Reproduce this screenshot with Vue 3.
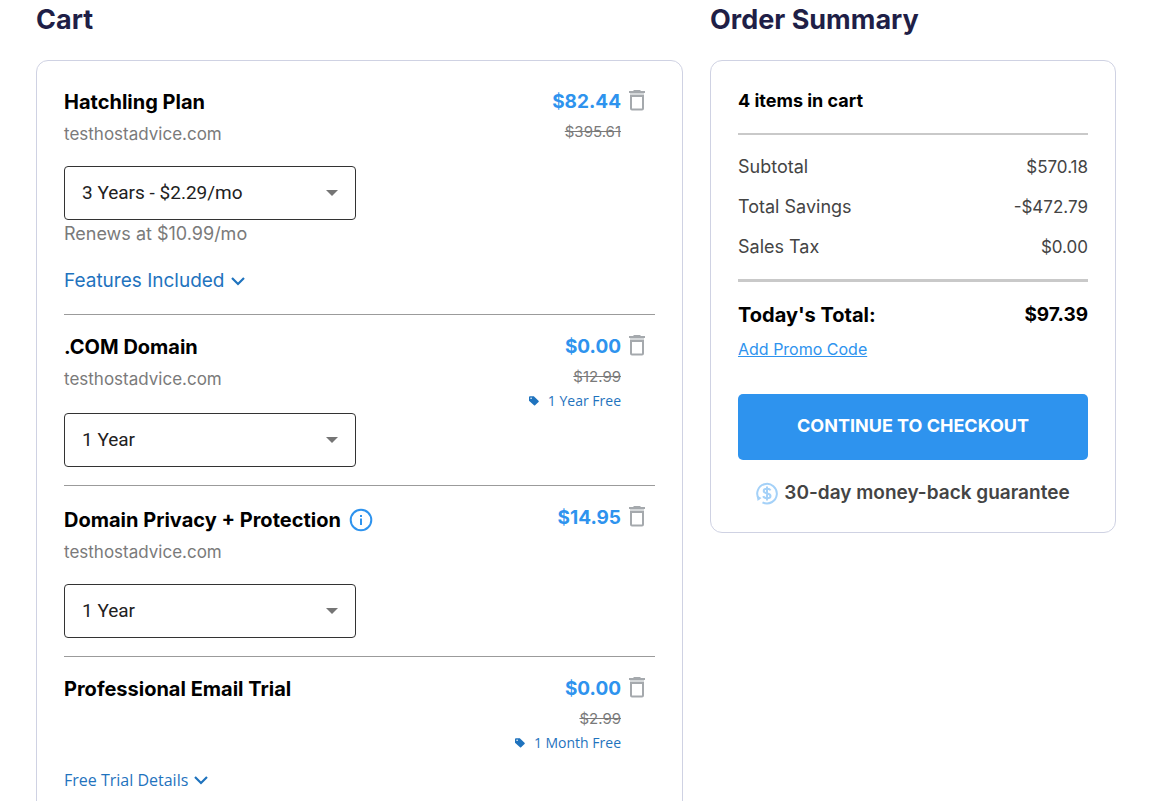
<script setup>
import { ref } from 'vue'

const items = ref([
  { id: 'plan', name: 'Hatchling Plan', domain: 'testhostadvice.com', term: '3 Years - $2.29/mo', renews: 'Renews at $10.99/mo', price: '$82.44', was: '$395.61', details: 'Features Included' },
  { id: 'com', name: '.COM Domain', domain: 'testhostadvice.com', term: '1 Year', price: '$0.00', was: '$12.99', offer: '1 Year Free' },
  { id: 'privacy', name: 'Domain Privacy + Protection', info: true, domain: 'testhostadvice.com', term: '1 Year', price: '$14.95' },
  { id: 'email', name: 'Professional Email Trial', price: '$0.00', was: '$2.99', offer: '1 Month Free', details: 'Free Trial Details' }
])

const lines = [
  { label: 'Subtotal', amount: '$570.18' },
  { label: 'Total Savings', amount: '-$472.79' },
  { label: 'Sales Tax', amount: '$0.00' }
]
</script>

<template>
  <main class="page">
    <section class="column">
      <h1 class="heading">Cart</h1>
      <div class="card cart">
        <article v-for="item in items" :key="item.id" class="item" :class="item.id">
          <div class="product">
            <h2 class="name">
              <span>{{ item.name }}</span>
              <button v-if="item.info" class="icon-button" type="button" aria-label="More information">
                <svg width="24" height="24" viewBox="0 0 24 24" fill="none" stroke="#2e93ee" stroke-width="2">
                  <circle cx="12" cy="12" r="10.3" />
                  <path d="M12 10.5v6.5M12 7v2" />
                </svg>
              </button>
            </h2>
            <p v-if="item.domain" class="site">{{ item.domain }}</p>
            <div v-if="item.term" class="term">
              <select :aria-label="'Term for ' + item.name">
                <option>{{ item.term }}</option>
              </select>
              <svg class="caret" width="12" height="6" viewBox="0 0 12 6"><path d="M0 0h12L6 6z" fill="#757575" /></svg>
            </div>
            <p v-if="item.renews" class="renews">{{ item.renews }}</p>
            <button v-if="item.details" class="details" type="button">
              <span>{{ item.details }}</span>
              <svg width="14" height="10" viewBox="0 0 14 10" fill="none" stroke="#1f73be" stroke-width="2.2"><path d="M1 2l6 6 6-6" /></svg>
            </button>
          </div>
          <div class="cost">
            <div class="price">{{ item.price }}</div>
            <del v-if="item.was" class="was">{{ item.was }}</del>
            <div v-if="item.offer" class="offer">
              <svg width="10" height="10" viewBox="0 0 10 10"><path fill="#1f73be" fill-rule="evenodd" d="M0 1.2Q0 .2 1 .2h3.8l4.7 4.6q.6.6 0 1.1L6.1 9.3q-.6.6-1.1 0L0 4.7zM2.1 1.4a.8.8 0 1 0 0 1.6.8.8 0 0 0 0-1.6z" /></svg>
              <span>{{ item.offer }}</span>
            </div>
          </div>
          <button class="icon-button remove" type="button" :aria-label="'Remove ' + item.name">
            <svg width="16" height="21" viewBox="0 0 16 21">
              <path fill="#a5a9ad" d="M5 0h6l1 1h4v2H0V1h4z" />
              <path fill="#d5d8da" d="M1 3h14v2H1z" />
              <path fill="none" stroke="#a5a9ad" stroke-width="2" d="M2 6h12v12.5q0 1-1 1H3q-1 0-1-1z" />
            </svg>
          </button>
        </article>
      </div>
    </section>

    <section class="column">
      <h1 class="heading">Order Summary</h1>
      <div class="card summary">
        <h2 class="count">4 items in cart</h2>
        <dl class="lines">
          <div v-for="line in lines" :key="line.label" class="line">
            <dt>{{ line.label }}</dt>
            <dd>{{ line.amount }}</dd>
          </div>
        </dl>
        <div class="total">
          <span>Today's Total:</span>
          <span class="sum">$97.39</span>
        </div>
        <a class="promo" href="#">Add Promo Code</a>
        <button class="checkout" type="button">CONTINUE TO CHECKOUT</button>
        <div class="guarantee">
          <svg width="22" height="23" viewBox="0 0 22 23" fill="none" stroke="#a4d1f8" stroke-width="2">
            <path d="M3.2 17.5A9.8 9.8 0 1 1 6.500 20.300" />
            <path d="M1 13.500l.5 5.500 4-3z" fill="#a4d1f8" stroke="none" />
            <path d="M14.500 8.300C14 7.100 12.800 6.800 11 6.800c-2 0-3.300.9-3.300 2.300 0 3.300 6.800 1.500 6.800 4.800 0 1.500-1.400 2.300-3.500 2.300-2 0-3.300-.6-3.800-2M11 4.500v14" />
          </svg>
          <span>30-day money-back guarantee</span>
        </div>
      </div>
    </section>
  </main>
</template>

<style>
body { margin: 0; background: #fff; }
</style>

<style scoped>
.page {
  display: grid;
  grid-template-columns: 647fr 406fr;
  gap: 27px;
  align-items: start;
  padding: 0 33px 0 36px;
  font-family: Inter, "Liberation Sans", sans-serif;
  color: #000;
}
h1, h2, p, dl, dd { margin: 0; }
button { font-family: inherit; cursor: pointer; }
.heading { height: 60px; font-size: 27px; line-height: 40px; font-weight: 700; color: #1f1f47; }
.card { border: 1px solid #cfd2e3; border-radius: 12px; padding: 0 27px; background: #fff; }
.item { display: flex; align-items: flex-start; padding: 16px 0 18px; border-bottom: 1px solid #9b9b9b; }
.plan { padding: 25px 0 20px; }
.privacy { padding-top: 18px; }
.product { flex: 1; }
.name { display: flex; align-items: center; gap: 8px; font-size: 20px; line-height: 32px; font-weight: 700; }
.site { font-size: 17px; line-height: 32px; color: #7a7a7a; }
.renews { font-size: 18px; line-height: 28px; color: #7a7a7a; }
.icon-button { display: flex; padding: 0; border: 0; background: none; }
.term { position: relative; width: 292px; margin-top: 16px; }
.com .term { margin-top: 18px; }
.com { padding-bottom: 18px; }
select {
  display: block;
  width: 100%;
  height: 54px;
  padding: 0 40px 2px 17px;
  appearance: none;
  border: 1px solid #333;
  border-radius: 4px;
  background: #fff;
  font-family: Roboto, sans-serif;
  font-size: 19px;
  color: #212121;
}
.caret { position: absolute; right: 18px; top: 24px; pointer-events: none; }
.details { display: flex; align-items: center; gap: 6px; margin-top: 20px; padding: 0; border: 0; background: none; font-size: 19px; line-height: 26px; color: #1f73be; }
.email .details { margin-top: 62px; font-family: "Open Sans", sans-serif; font-size: 16px; }
.cost { display: flex; flex-direction: column; align-items: flex-end; }
.price { font-size: 19px; line-height: 32px; font-weight: 700; color: #2e93ee; }
.was { font-size: 15px; line-height: 28px; color: #7a7a7a; }
.offer { display: flex; align-items: center; gap: 9px; font-family: "Open Sans", sans-serif; font-size: 14px; line-height: 20px; color: #1f73be; }
.remove { margin: 4px 10px 0 8px; }
.privacy .price { line-height: 28px; }
.privacy .remove { margin-top: 2px; }
.summary { padding: 24px 27px 22px; }
.count { padding-bottom: 16px; border-bottom: 2px solid #c9c9c9; font-size: 18px; line-height: 32px; font-weight: 700; }
.lines { padding: 12px 0; border-bottom: 3px solid #c9c9c9; font-size: 18px; line-height: 40px; color: #444; }
.lines dd { font-size: 17px; }
.line, .total { display: flex; justify-content: space-between; }
.total { margin-top: 16px; font-size: 20px; line-height: 34px; font-weight: 700; }
.sum { font-size: 19px; }
.promo { display: block; width: fit-content; font-size: 16px; line-height: 34px; color: #2e93ee; text-decoration: underline; }
.checkout { display: block; width: 100%; height: 66px; margin-top: 28px; padding: 0 0 3px; border: 0; border-radius: 5px; background: #2e93ee; color: #fff; font-size: 18px; font-weight: 700; }
.guarantee { display: flex; align-items: center; justify-content: center; gap: 6px; margin-top: 17px; padding-bottom: 1px; font-size: 19px; line-height: 32px; font-weight: 600; color: #444; }
</style>
